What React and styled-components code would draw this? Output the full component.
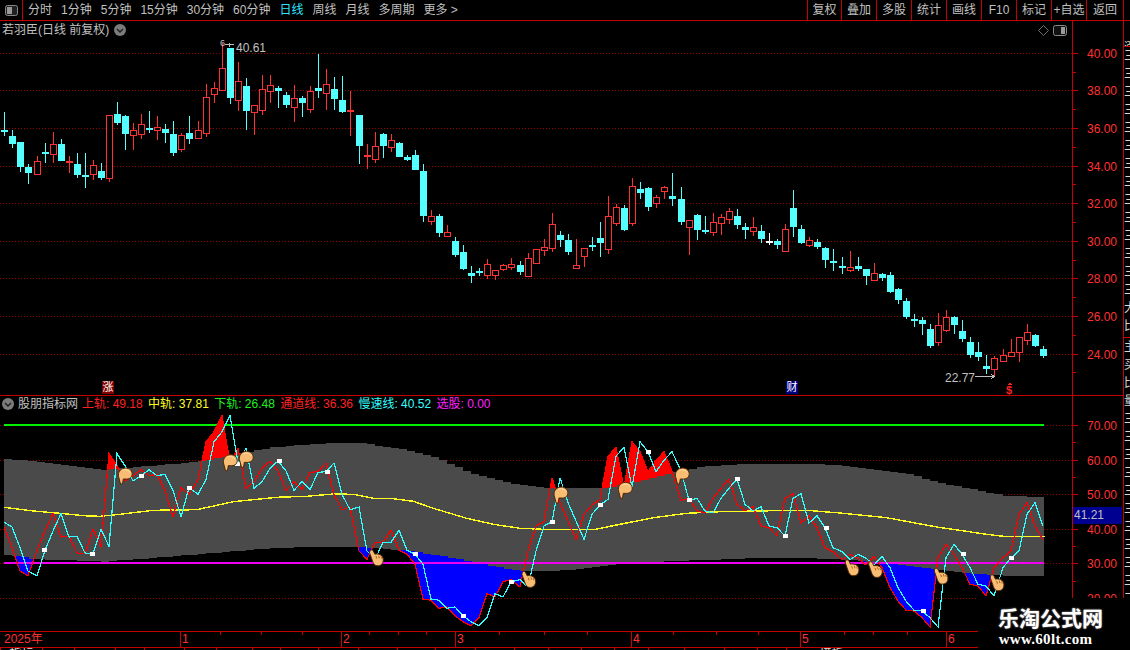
import React from 'react'
import styled, { createGlobalStyle } from 'styled-components'

const RED_LINE = '#c40000'
const GREY = '#c0c0c0'
const UI_FONT = '"Liberation Sans", "Noto Sans CJK SC", sans-serif'

const GlobalStyle = createGlobalStyle`
    html, body { margin: 0; padding: 0; background: #000; }
    body { font-family: ${UI_FONT}; }
`

const Page = styled.div`
    position: relative;
    width: 1130px;
    height: 650px;
    overflow: hidden;
    background: #000;
    color: ${GREY};
    font-size: 12px;
    display: flex;
    flex-direction: column;
`

const Toolbar = styled.div`
    flex: 0 0 19px;
    display: flex;
    align-items: stretch;
    border-bottom: 1px solid ${RED_LINE};
    line-height: 20px;
`

const ToggleCell = styled.div`
    flex: 0 0 22px;
    display: flex;
    align-items: center;
    justify-content: center;
    border-right: 1px solid ${RED_LINE};
`

const Periods = styled.div`
    flex: 1;
    display: flex;
    gap: 9px;
    padding-left: 5px;
`

const Period = styled.span`
    color: ${(p) => (p.$active ? '#2ee6ff' : GREY)};
    white-space: nowrap;
`

const ToolButtons = styled.div`
    display: flex;
    margin-right: 6px;
    border-right: 1px solid ${RED_LINE};
`

const ToolButton = styled.div`
    width: ${(p) => p.$w}px;
    box-sizing: border-box;
    border-left: 1px solid ${RED_LINE};
    text-align: center;
    white-space: nowrap;
    overflow: hidden;
`

const Main = styled.div`
    flex: 0 0 610px;
    display: flex;
`

const Panes = styled.div`
    flex: 0 0 1123px;
    display: flex;
    flex-direction: column;
`

const Pane = styled.div`
    position: relative;
    height: ${(p) => p.$h}px;
    display: flex;
    border-bottom: ${(p) => (p.$line ? `1px solid ${RED_LINE}` : 'none')};
`

const Plot = styled.svg`
    flex: 0 0 1072px;
    height: 100%;
    display: block;
`

const Axis = styled.div`
    position: relative;
    flex: 1;
    border-left: 1px solid ${RED_LINE};
`

const AxisLabel = styled.span`
    position: absolute;
    left: 14px;
    line-height: 14px;
    margin-top: -6px;
    color: #ff3232;
`

const AxisTick = styled.i`
    position: absolute;
    left: 0;
    width: ${(p) => (p.$minor ? 3 : 5)}px;
    height: 1px;
    background: ${RED_LINE};
`

const CurrentValue = styled.div`
    position: absolute;
    left: 0;
    top: 111px;
    width: 49px;
    height: 17px;
    background: #000090;
    color: ${GREY};
    line-height: 17px;
    text-indent: 1px;
`

const PaneTitle = styled.div`
    position: absolute;
    left: 2px;
    top: 1px;
    display: flex;
    align-items: center;
    gap: 5px;
    line-height: 16px;
    white-space: nowrap;
`

const Legend = styled.div`
    position: absolute;
    left: 2px;
    top: 0;
    display: flex;
    align-items: center;
    line-height: 16px;
    white-space: nowrap;
`

const LegendName = styled.span`
    margin: 0 4px 0 4px;
`

const LegendItem = styled.span`
    color: ${(p) => p.$color};
    margin-right: 5.4px;
`

const CornerIcons = styled.div`
    position: absolute;
    top: 4px;
    left: 1038px;
    display: flex;
    align-items: center;
    gap: 4px;
`

const Badge = styled.span`
    position: absolute;
    left: ${(p) => p.$x}px;
    top: 360px;
    width: 12px;
    height: 13px;
    background: ${(p) => p.$bg};
    color: #fff;
    font-size: 11px;
    line-height: 13px;
    text-align: center;
`

const SideStrip = styled.div`
    flex: 1;
    border-left: 1px solid ${RED_LINE};
    overflow: hidden;
    display: flex;
    flex-direction: column;
`

const SideBlock = styled.div`
    height: ${(p) => p.$h}px;
    box-sizing: border-box;
    border-bottom: 1px solid ${RED_LINE};
    overflow: hidden;
    line-height: 18px;
    color: #d8d8d8;
    white-space: pre;
`

const TimeBar = styled.div`
    position: relative;
    flex: 0 0 15px;
    display: flex;
    border-top: 1px solid ${RED_LINE};
    border-bottom: 1px solid ${RED_LINE};
    color: #ff3232;
    line-height: 15px;
`

const MonthCell = styled.div`
    width: ${(p) => p.$w}px;
    box-sizing: border-box;
    padding-left: ${(p) => (p.$first ? 4 : 1)}px;
    border-left: ${(p) => (p.$first ? 'none' : `1px solid ${RED_LINE}`)};
`

const WeekTick = styled.i`
    position: absolute;
    top: 0;
    width: 1px;
    height: 3px;
    background: ${RED_LINE};
`

const TabRow = styled.div`
    flex: 1;
    display: flex;
    overflow: hidden;
`

const Tab = styled.div`
    width: ${(p) => p.$w}px;
    box-sizing: border-box;
    border-left: 1px solid ${RED_LINE};
    color: #ddd;
    line-height: 12px;
    text-align: center;
    white-space: nowrap;
`

const Watermark = styled.div`
    position: absolute;
    left: 978px;
    top: 598px;
    width: 152px;
    height: 52px;
    background: #000;
    color: #fff;
    text-align: center;
    font-weight: 700;
`

const WatermarkName = styled.div`
    margin: 8px 0 0 -7px;
    font-size: 21px;
    line-height: 25px;
    text-shadow: 0 0 2px #aaa;
`

const WatermarkUrl = styled.div`
    margin-left: -17px;
    font-family: "Liberation Serif", serif;
    font-size: 15px;
    line-height: 17px;
    letter-spacing: 0.3px;
`

const PERIODS = ['分时', '1分钟', '5分钟', '15分钟', '30分钟', '60分钟', '日线', '周线', '月线', '多周期', '更多 >']
const TOOLS = [['复权', 34], ['叠加', 35], ['多股', 35], ['统计', 35], ['画线', 35], ['F10', 35], ['标记', 35], ['+自选', 35], ['返回', 37]]
const MONTHS = [['2025年', 180], ['1', 161], ['2', 114], ['3', 176], ['4', 169], ['5', 146], ['6', 184]]
const WEEK_TICKS = [220, 261, 302, 369, 398, 426, 499, 544, 587, 673, 716, 758, 844, 873, 907]
const TABS = [['指标', 42], ['', 32], ['', 41], ['', 29], ['', 40], ['', 32], ['', 36], ['', 28], ['', 38], ['', 40], ['', 39], ['', 38], ['', 40], ['', 39], ['', 34], ['', 33], ['', 33], ['', 34], ['', 36], ['', 40], ['', 33], ['', 29], ['模板', 90]]

// hi, body top, body bottom, lo, colour (page pixels)
const CANDLES = [
    [111,129,130,135,'c'],[129,135,143,147,'c'],[141,141,166,171,'c'],[163,166,172,183,'c'],[155,160,173,173,'r'],
    [142,151,152,162,'c'],[131,143,153,162,'r'],[138,143,160,160,'c'],[155,160,161,172,'r'],[152,163,174,177,'c'],
    [152,174,175,187,'c'],[159,164,173,179,'r'],[162,170,177,179,'c'],[114,114,177,181,'r'],[101,113,122,124,'c'],
    [114,115,133,149,'c'],[122,129,134,149,'r'],[113,123,133,138,'r'],[110,127,128,132,'c'],[115,126,129,139,'r'],
    [123,128,132,142,'c'],[120,133,152,155,'c'],[132,134,148,151,'r'],[115,132,138,143,'c'],[120,129,137,138,'r'],
    [83,96,132,136,'r'],[81,87,93,102,'r'],[42,67,89,90,'r'],[47,47,97,103,'c'],[61,80,99,110,'r'],
    [77,85,110,129,'c'],[104,104,111,134,'r'],[74,88,109,114,'r'],[74,84,90,102,'r'],[85,87,90,107,'c'],
    [91,94,104,107,'c'],[84,97,106,121,'r'],[95,97,102,116,'c'],[85,90,108,112,'r'],[53,87,90,97,'c'],
    [68,83,92,109,'r'],[76,88,98,109,'c'],[75,99,111,112,'c'],[90,109,111,135,'r'],[114,114,145,163,'c'],
    [143,154,156,168,'r'],[131,145,158,162,'r'],[132,133,145,157,'c'],[133,139,146,151,'r'],[141,142,156,156,'c'],
    [154,156,159,160,'c'],[149,154,169,169,'c'],[163,170,215,221,'c'],[209,215,220,224,'r'],[213,215,232,236,'c'],
    [224,231,235,235,'r'],[236,240,254,256,'c'],[244,251,268,269,'c'],[265,272,275,282,'c'],[267,270,272,275,'c'],
    [258,263,274,278,'r'],[269,269,274,279,'r'],[263,264,268,270,'r'],[257,263,266,269,'r'],[260,264,271,274,'c'],
    [252,257,275,276,'r'],[248,248,262,262,'r'],[238,246,249,255,'r'],[212,223,247,251,'r'],[230,234,239,246,'c'],
    [233,239,251,254,'c'],[238,264,267,267,'r'],[247,247,255,266,'r'],[236,244,246,250,'c'],[221,237,242,256,'c'],
    [195,215,248,253,'r'],[203,206,222,225,'r'],[204,207,229,230,'c'],[177,185,222,225,'r'],[181,188,192,198,'c'],
    [186,187,206,210,'c'],[194,196,202,207,'r'],[185,186,190,198,'r'],[172,195,198,205,'c'],[186,198,221,224,'c'],
    [219,219,226,254,'r'],[213,214,229,239,'c'],[215,229,230,233,'c'],[212,221,231,235,'r'],[213,216,222,234,'r'],
    [207,210,218,223,'r'],[208,215,224,228,'c'],[222,226,229,238,'c'],[216,226,230,235,'r'],[224,230,238,242,'c'],
    [232,240,241,244,'w'],[238,240,244,248,'c'],[223,228,250,250,'r'],[189,207,226,236,'c'],[224,228,242,243,'c'],
    [236,239,244,246,'r'],[238,241,246,248,'c'],[246,247,259,267,'c'],[248,260,262,270,'c'],[256,265,267,273,'c'],
    [250,266,269,271,'r'],[256,265,268,270,'c'],[268,268,275,284,'c'],[262,272,279,279,'r'],[272,273,277,280,'c'],
    [271,274,291,292,'c'],[287,288,299,303,'c'],[297,300,316,318,'c'],[313,318,319,326,'c'],[316,319,323,334,'c'],
    [323,328,345,347,'c'],[312,324,341,345,'r'],[309,316,329,331,'r'],[315,316,324,333,'c'],[319,330,338,341,'c'],
    [336,341,354,357,'c'],[341,351,356,360,'c'],[354,365,368,373,'c'],[355,357,368,375,'r'],[348,354,360,361,'r'],
    [338,351,355,355,'r'],[336,336,351,361,'r'],[323,331,339,344,'r'],[333,334,345,346,'c'],[345,348,355,357,'c'],
]

const CANDLE_COLOR = { c: '#54ffff', r: '#ff3232', w: '#ffffff' }
const STEP = 8.05
const barX = (i) => Math.round(4.3 + STEP * i)

// slow line per bar, in 3x crop units; the channel line is the same series one bar earlier
const SLOW = [
    334,348,410,480,494,418,360,308,378,376,426,428,354,406,128,164,210,194,176,194,190,238,318,230,250,206,92,62,14,155,
    112,232,212,172,150,180,238,212,236,184,182,156,250,296,288,420,445,394,394,358,418,430,460,564,568,592,588,614,632,644,
    620,548,558,512,506,528,420,345,332,200,275,330,385,310,282,265,135,110,228,92,122,182,148,122,180,268,262,300,306,262,
    232,204,280,300,287,345,350,375,262,248,336,314,350,410,422,446,430,442,462,436,470,530,570,598,600,620,648,440,400,430,
    470,520,525,555,470,440,420,310,275,345,387,
]

const TOP_BAND = [[12,144],[100,152],[200,165],[300,177],[400,168],[500,160],[600,150],[700,130],[800,110],[900,102],[1000,96],[1080,97],[1200,115],[1300,140],[1400,185],[1500,212],[1560,222],[1650,232],[1810,230],[1910,210],[2020,182],[2110,166],[2220,160],[2460,159],[2610,175],[2710,187],[2810,215],[2910,235],[3010,255],[3135,258]]
const BOTTOM_BAND = [[12,432],[100,445],[200,448],[300,452],[400,445],[500,437],[600,428],[700,420],[800,412],[900,408],[1080,408],[1200,418],[1300,432],[1400,452],[1500,472],[1560,480],[1660,480],[1760,470],[1860,458],[1960,452],[2160,445],[2260,441],[2410,441],[2510,445],[2660,458],[2810,475],[2910,488],[3010,494],[3135,494]]
const MID_LINE = [[12,289],[100,300],[180,307],[250,314],[300,316],[360,310],[460,298],[590,296],[700,272],[830,259],[920,256],[1000,249],[1060,250],[1120,262],[1180,263],[1240,271],[1300,292],[1400,322],[1480,340],[1560,352],[1660,356],[1780,356],[1860,340],[1960,320],[2060,307],[2160,302],[2260,300],[2420,298],[2520,306],[2660,320],[2810,348],[2960,370],[3010,376],[3135,376]]

const MARKERS = [[132,418],[276,428],[424,194],[568,230],[712,160],[836,150],[980,182],[1246,428],[1390,614],[1534,512],[1656,332],[1800,282],[1945,122],[2068,268],[2212,204],[2356,375],[2479,350],[2768,600],[2890,430],[3034,440]]
const HANDS_DOWN = [[375,195],[690,155],[738,145],[1682,252],[1875,238],[2046,195]]
const HANDS_UP = [[1128,440],[1585,505],[2555,470],[2625,475],[2822,495],[2990,515]]

const toX = (z) => z / 3
const toY = (z) => 410 + z / 3

const lerp = (pts, x) => {
    for (let i = 1; i < pts.length; i++) {
        if (x <= pts[i][0]) {
            const [x0, y0] = pts[i - 1]
            const [x1, y1] = pts[i]
            return y0 + ((y1 - y0) * (x - x0)) / (x1 - x0)
        }
    }
    return pts[pts.length - 1][1]
}

const bars = Array.from({ length: 131 }, (_, i) => i)
const stairY = (pts, i) => toY(lerp(pts, barX(i) * 3))

const bandPath = () => {
    const up = []
    const down = []
    bars.forEach((i) => {
        const x0 = i === 0 ? 4 : barX(i)
        const x1 = i === 130 ? 1044 : barX(i + 1)
        up.push(`${x0},${stairY(TOP_BAND, i).toFixed(0)}`, `${x1},${stairY(TOP_BAND, i).toFixed(0)}`)
        down.unshift(`${x1},${stairY(BOTTOM_BAND, i).toFixed(0)}`, `${x0},${stairY(BOTTOM_BAND, i).toFixed(0)}`)
    })
    return `M${up.concat(down).join('L')}Z`
}

const slowPoints = SLOW.slice(0, 130).map((v, i) => `${barX(i)},${toY(v).toFixed(1)}`).join(' ')
const channelPoints = SLOW.slice(1).map((v, i) => `${barX(i)},${toY(v).toFixed(1)}`).join(' ')
const midPoints = MID_LINE.map(([x, y]) => `${toX(x).toFixed(1)},${toY(y).toFixed(1)}`).join(' ')

// one pixel columns between the channel line and the band
const fillPaths = () => {
    let red = ''
    let blue = ''
    const pts = SLOW.slice(1).map((v, i) => [barX(i), toY(v)])
    for (let x = 4; x < 1044; x++) {
        const i = Math.max(0, Math.min(130, Math.floor((x - 4.3) / STEP)))
        const ry = lerp(pts, x)
        const top = stairY(TOP_BAND, i)
        const bottom = stairY(BOTTOM_BAND, i)
        if (ry < top) red += `M${x} ${ry.toFixed(1)}V${top.toFixed(1)}H${x + 1}V${ry.toFixed(1)}Z`
        if (ry > bottom) blue += `M${x} ${bottom.toFixed(1)}V${ry.toFixed(1)}H${x + 1}V${bottom.toFixed(1)}Z`
    }
    return { red, blue }
}

const priceY = (p) => 51.7 + (40 - p) * 18.8
const indicatorY = (v) => 424 + (70 - v) * 3.46
const PRICES = [40, 38, 36, 34, 32, 30, 28, 26, 24]
const LEVELS = [70, 60, 50, 40, 30, 20]

const Candle = ({ data, i }) => {
    const [hi, top, bottom, lo, kind] = data
    const color = CANDLE_COLOR[kind]
    const x = barX(i)
    const hollow = kind === 'r' && bottom - top >= 3
    return <g>
        <rect x={x} y={hi} width={1} height={Math.max(lo - hi, 1)} fill={color} />
        {hollow
            ? <rect x={x - 2.5} y={top + 0.5} width={6} height={bottom - top} fill="#000" stroke={color} />
            : <rect x={x - 3} y={top} width={7} height={Math.max(bottom - top, 2)} fill={color} />}
    </g>
}

const HandDown = ({ x, y }) => <g transform={`translate(${x - 7.5} ${y - 8.5})`} shapeRendering="auto">
    <path d="M3 16.5 L1 9 C0.3 5 2.5 1.5 6.5 0.7 C10.5 0 14.3 2 14.7 6 C15 10 11.5 12 8 11.5 L5.8 11.5 L5 16.5 Z" fill="#f8bd72" stroke="#4f2604" />
    <path d="M5 3 C7.5 1.6 11 2.2 12.6 5" fill="none" stroke="#ffe2b0" />
</g>

const HandUp = ({ x, y }) => <g transform={`translate(${x - 7} ${y - 8.5})`} shapeRendering="auto">
    <path d="M1 1.2 C2.6 0 4 0.8 4.8 2.8 L5.8 5 C8.5 4.2 13 5.2 14 8.8 C15 13 13 16.3 9.3 16.6 C5.8 16.9 4.4 14.5 3.4 11.5 L0.6 3.6 Z" fill="#f8bd72" stroke="#4f2604" />
    <path d="M7 7 L7.8 9.5 M9.6 6.6 L10.4 9 M12 7.4 L12.6 9.4" fill="none" stroke="#a8641c" />
</g>

const GridLines = ({ ys, width }) => ys.map((y) => (
    <line key={y} x1={0} x2={width} y1={Math.round(y) + 0.5} y2={Math.round(y) + 0.5} stroke="#960000" strokeDasharray="1 2" />
))

const SplitIcon = () => <svg width="14" height="11" viewBox="0 0 14 11">
    <rect x="0.5" y="0.5" width="13" height="10" rx="2" fill="#111" stroke="#8a8a8a" />
    <rect x="8" y="2" width="4" height="7" fill="#9a9a9a" />
</svg>

const ToggleIcon = () => <svg width="13" height="11" viewBox="0 0 13 11">
    <rect x="0.5" y="0.5" width="12" height="10" rx="2" fill="#222" stroke="#8a8a8a" />
    <rect x="2" y="2" width="5" height="7" fill="#9a9a9a" />
</svg>

const DiamondIcon = () => <svg width="11" height="11" viewBox="0 0 11 11">
    <path d="M5.5 0.5 L10.5 5.5 L5.5 10.5 L0.5 5.5 Z" fill="none" stroke="#6e6e6e" />
</svg>

const ChevronDot = () => <svg width="12" height="12" viewBox="0 0 12 12">
    <circle cx="6" cy="6" r="6" fill="#7c7c7c" />
    <path d="M3 5 L6 8 L9 5" fill="none" stroke="#1c1c1c" strokeWidth="1.4" />
</svg>

const PriceChart = () => <Plot viewBox="0 20 1072 374" shapeRendering="crispEdges">
    <GridLines ys={PRICES.map(priceY)} width={1072} />
    {CANDLES.map((c, i) => <Candle key={i} data={c} i={i} />)}
    <text x={220} y={45} fill={GREY} fontSize="9" shapeRendering="auto">6</text>
    <path d="M225 43.5H234M229 41.5V46" stroke={GREY} fill="none" />
    <text x={236} y={51} fill={GREY} fontSize="12">40.61</text>
    <text x={945} y={381} fill={GREY} fontSize="12">22.77</text>
    <path d="M975 375.5H994M991 373L994 375.5L991 378" stroke={GREY} fill="none" />
    <path d="M1010 381l2.5 3h-5z" fill="#ff2020" />
    <text x={1006} y={393} fill="#ff2020" fontSize="11" fontWeight="700">$</text>
</Plot>

const IndicatorChart = () => {
    const { red, blue } = fillPaths()
    return <Plot viewBox="0 395 1072 235" shapeRendering="crispEdges">
        <GridLines ys={LEVELS.map(indicatorY)} width={1072} />
        <rect x={4} y={423} width={1040} height={2} fill="#00f000" />
        <path d={bandPath()} fill="#4a4a4a" />
        <path d={red} fill="#ff0000" />
        <path d={blue} fill="#0000ff" />
        <rect x={4} y={561} width={1040} height={2} fill="#f000f0" />
        <polyline points={midPoints} fill="none" stroke="#ffff20" strokeWidth="1.4" />
        <polyline points={channelPoints} fill="none" stroke="#ff0000" strokeWidth="1.2" />
        <polyline points={slowPoints} fill="none" stroke="#33ffff" strokeWidth="1.2" />
        {MARKERS.map(([x, y]) => <rect key={x} x={toX(x) - 2} y={toY(y) - 2} width={5} height={4} fill="#fff" />)}
        {HANDS_DOWN.map(([x, y]) => <HandDown key={x} x={toX(x)} y={toY(y)} />)}
        {HANDS_UP.map(([x, y]) => <HandUp key={x} x={toX(x)} y={toY(y)} />)}
    </Plot>
}

const ScaleAxis = ({ marks, toPx, top, step, children }) => <Axis>
    {marks.map((m) => <React.Fragment key={m}>
        <AxisTick style={{ top: Math.round(toPx(m)) - top }} />
        <AxisTick $minor style={{ top: Math.round(toPx(m - step / 2)) - top }} />
        <AxisLabel style={{ top: Math.round(toPx(m)) - top }}>{m.toFixed(2)}</AxisLabel>
    </React.Fragment>)}
    {children}
</Axis>

export default () => <Page>
    <GlobalStyle />
    <Toolbar>
        <ToggleCell><ToggleIcon /></ToggleCell>
        <Periods>
            {PERIODS.map((p) => <Period key={p} $active={p === '日线'}>{p}</Period>)}
        </Periods>
        <ToolButtons>
            {TOOLS.map(([label, w]) => <ToolButton key={label} $w={w}>{label}</ToolButton>)}
        </ToolButtons>
    </Toolbar>
    <Main>
        <Panes>
            <Pane $h={374} $line>
                <PriceChart />
                <ScaleAxis marks={PRICES} toPx={priceY} top={20} step={2} />
                <PaneTitle>若羽臣(日线 前复权)<ChevronDot /></PaneTitle>
                <CornerIcons><DiamondIcon /><SplitIcon /></CornerIcons>
                <Badge $x={102} $bg="#800000">涨</Badge>
                <Badge $x={786} $bg="#000080">财</Badge>
            </Pane>
            <Pane $h={235}>
                <IndicatorChart />
                <ScaleAxis marks={LEVELS} toPx={indicatorY} top={395} step={10}>
                    <CurrentValue>41.21</CurrentValue>
                </ScaleAxis>
                <Legend>
                    <ChevronDot />
                    <LegendName>股朋指标网</LegendName>
                    <LegendItem $color="#ff2020">上轨: 49.18</LegendItem>
                    <LegendItem $color="#ffff20">中轨: 37.81</LegendItem>
                    <LegendItem $color="#20f020">下轨: 26.48</LegendItem>
                    <LegendItem $color="#ff2020">通道线: 36.36</LegendItem>
                    <LegendItem $color="#33ffff">慢速线: 40.52</LegendItem>
                    <LegendItem $color="#ff20ff">选股: 0.00</LegendItem>
                </Legend>
            </Pane>
        </Panes>
        <SideStrip>
            <SideBlock $h={26}>{'\n涨幅'}</SideBlock>
            <SideBlock $h={291}>{'三\n三\n三\n三\n三\n三\n三\n三\n三\n三\n三\n三\n三\n三\n大\n比'}</SideBlock>
            <SideBlock $h={292}>{'主\n买\n比\n量\n三\n三\n三\n三\n三\n三\n三\n三\n三\n三\n三\n三'}</SideBlock>
        </SideStrip>
    </Main>
    <TimeBar>
        {MONTHS.map(([label, w], i) => <MonthCell key={label} $w={w} $first={i === 0}>{label}</MonthCell>)}
        {WEEK_TICKS.map((x) => <WeekTick key={x} style={{ left: x }} />)}
    </TimeBar>
    <TabRow>
        {TABS.map(([label, w], i) => <Tab key={i} $w={w}>{label}</Tab>)}
    </TabRow>
    <Watermark>
        <WatermarkName>乐淘公式网</WatermarkName>
        <WatermarkUrl>www.60lt.com</WatermarkUrl>
    </Watermark>
</Page>
